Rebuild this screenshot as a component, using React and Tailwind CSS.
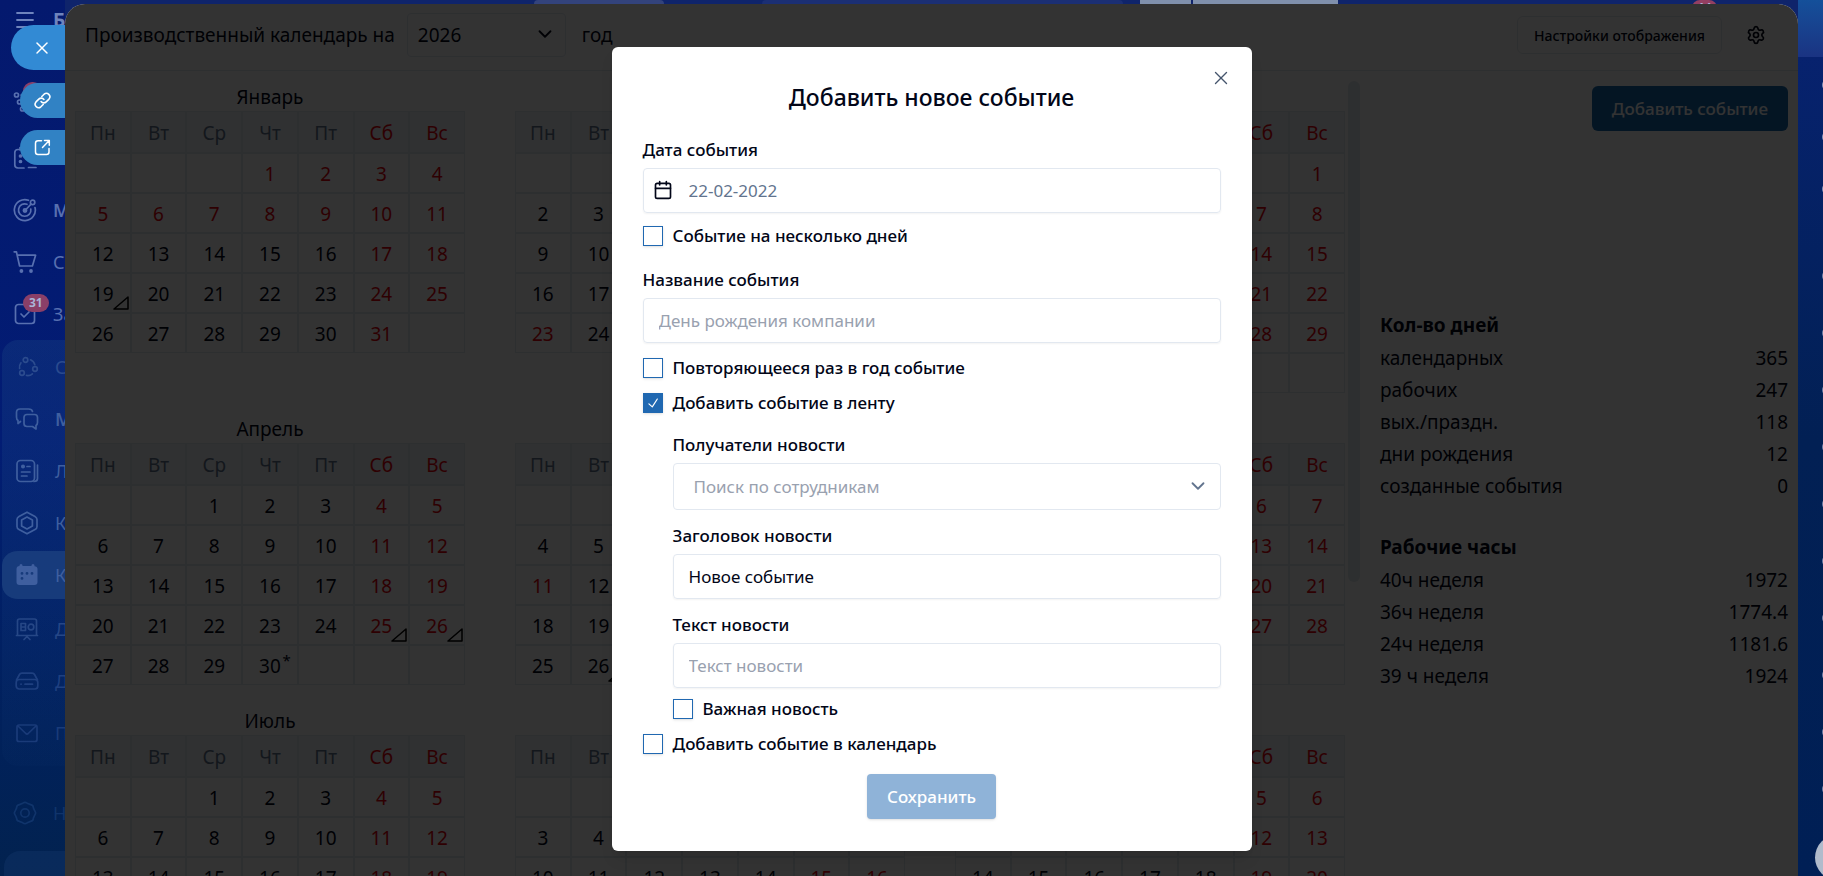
import { useState } from 'react'
import { Calendar, ChevronDown, Menu, Settings, X } from 'lucide-react'

const weekdays = ['Пн', 'Вт', 'Ср', 'Чт', 'Пт', 'Сб', 'Вс']

// start: index of the first weekday, 0 = Monday
const months = [
  { name: 'Январь', start: 3, days: 31, rows: 5, holidays: [1, 2, 5, 6, 7, 8, 9], events: [19] },
  { name: 'Февраль', start: 6, days: 28, rows: 5, holidays: [23] },
  { name: 'Март', start: 6, days: 31, rows: 6, holidays: [9] },
  { name: 'Апрель', start: 2, days: 30, rows: 5, events: [25, 26], short: [30] },
  { name: 'Май', start: 4, days: 31, rows: 5, holidays: [1, 11], events: [26] },
  { name: 'Июнь', start: 0, days: 30, rows: 5, holidays: [12] },
  { name: 'Июль', start: 2, days: 31, rows: 5 },
  { name: 'Август', start: 5, days: 31, rows: 6 },
  { name: 'Сентябрь', start: 1, days: 30, rows: 5 },
]

const dayStats = [
  ['календарных', '365'],
  ['рабочих', '247'],
  ['вых./праздн.', '118'],
  ['дни рождения', '12'],
  ['созданные события', '0'],
]

const hourStats = [
  ['40ч неделя', '1972'],
  ['36ч неделя', '1774.4'],
  ['24ч неделя', '1181.6'],
  ['39 ч неделя', '1924'],
]

function Month({ name, start, days, rows, holidays = [], events = [], short = [] }) {
  return (
    <section>
      <h2 className="h-[30px] text-center text-[19px] leading-8">{name}</h2>
      <table className="w-full table-fixed border-separate border-spacing-0 text-center text-[19px]">
        <thead>
          <tr>
            {weekdays.map((day, i) => (
              <th
                key={day}
                className={`h-[42px] border border-slate-200 bg-slate-100 pt-0.5 font-normal ${i > 4 ? 'text-red-600' : 'text-slate-500'}`}
              >
                {day}
              </th>
            ))}
          </tr>
        </thead>
        <tbody>
          {Array.from({ length: rows }, (_, row) => (
            <tr key={row}>
              {weekdays.map((weekday, col) => {
                const day = row * 7 + col - start + 1
                const visible = day > 0 && day <= days
                const off = col > 4 || holidays.includes(day)
                return (
                  <td key={weekday} className={`relative h-10 border border-slate-200 pt-0.5 ${off ? 'text-red-600' : ''}`}>
                    {visible && day}
                    {events.includes(day) && (
                      <svg className="absolute right-px bottom-0.5 text-black" width="16" height="14" viewBox="0 0 16 14" fill="none" stroke="currentColor" strokeWidth="1.5" strokeLinejoin="round">
                        <path d="M1 13H15V1Z" />
                      </svg>
                    )}
                    {short.includes(day) && <sup className="absolute top-1.5 right-1.5 text-[15px] leading-4">*</sup>}
                  </td>
                )
              })}
            </tr>
          ))}
        </tbody>
      </table>
    </section>
  )
}

function Stats({ title, rows }) {
  return (
    <div>
      <h3 className="h-[33px] text-[19px] leading-8 font-bold">{title}</h3>
      <dl>
        {rows.map(([label, value]) => (
          <div key={label} className="flex h-8 justify-between text-[19px] leading-8">
            <dt>{label}</dt>
            <dd>{value}</dd>
          </div>
        ))}
      </dl>
    </div>
  )
}

function Checkbox({ label, defaultChecked }) {
  const [checked, setChecked] = useState(Boolean(defaultChecked))
  return (
    <label className="flex h-5 items-center gap-2.5 text-[17px] font-medium">
      <span className="grid size-5 place-items-center">
        <input
          type="checkbox"
          checked={checked}
          onChange={(e) => setChecked(e.target.checked)}
          className="col-start-1 row-start-1 size-5 appearance-none border border-[#2068b1] shadow-sm checked:bg-[#2068b1]"
        />
        {checked && (
          <svg className="pointer-events-none relative col-start-1 row-start-1 text-white" width="18" height="18" viewBox="0 0 15 15" fill="none" stroke="currentColor" strokeLinecap="round" strokeLinejoin="round">
            <path d="M4.1 8.2L6.9 10.7L11.1 4.2" />
          </svg>
        )}
      </span>
      {label}
    </label>
  )
}

function Field({ id, label, ...input }) {
  return (
    <div>
      <label htmlFor={id} className="block h-7 text-[17px] leading-5 font-medium">
        {label}
      </label>
      <input
        id={id}
        className="h-[45px] w-full rounded border border-slate-200 px-[15px] text-[17px] shadow-xs placeholder:text-gray-400"
        {...input}
      />
    </div>
  )
}

function EventDialog() {
  return (
    <div role="dialog" aria-labelledby="dialog-title" className="relative w-[640px] rounded-md bg-white px-[31px] pt-[34px] pb-8 text-slate-950 shadow-lg">
      <button type="button" aria-label="Закрыть" className="absolute top-5 right-5 text-slate-600">
        <X size={22} strokeWidth={1.5} />
      </button>
      <h1 id="dialog-title" className="text-center text-[23px] leading-8 font-medium">
        Добавить новое событие
      </h1>

      <form className="mt-[27px]">
        <label htmlFor="date" className="block h-7 text-[17px] leading-5 font-medium">
          Дата события
        </label>
        <div className="relative">
          <Calendar size={20} className="absolute top-3 left-2.5" />
          <input
            id="date"
            placeholder="22-02-2022"
            className="h-[45px] w-full rounded border border-slate-200 pr-4 pl-[45px] text-[17px] shadow-xs placeholder:text-slate-500"
          />
        </div>
        <div className="mt-[13px] mb-6">
          <Checkbox label="Событие на несколько дней" />
        </div>

        <Field id="name" label="Название события" placeholder="День рождения компании" />
        <div className="mt-[15px] flex flex-col gap-[15px]">
          <Checkbox label="Повторяющееся раз в год событие" />
          <Checkbox label="Добавить событие в ленту" defaultChecked />
        </div>

        <div className="mt-[22px] ml-[30px] flex flex-col gap-4">
          <div>
            <label htmlFor="recipients" className="block h-7 text-[17px] leading-5 font-medium">
              Получатели новости
            </label>
            <div className="relative">
              <select id="recipients" className="h-[47px] w-full appearance-none rounded border border-slate-200 bg-white px-5 text-[17px] text-gray-400">
                <option>Поиск по сотрудникам</option>
              </select>
              <ChevronDown size={22} className="pointer-events-none absolute top-3 right-3 text-slate-500" />
            </div>
          </div>
          <Field id="news-title" label="Заголовок новости" defaultValue="Новое событие" />
          <Field id="news-text" label="Текст новости" placeholder="Текст новости" />
        </div>
        <div className="mt-[11px] mb-[15px] ml-[30px]">
          <Checkbox label="Важная новость" />
        </div>
        <Checkbox label="Добавить событие в календарь" />

        <div className="mt-5 flex justify-center">
          <button type="submit" disabled className="h-[45px] rounded bg-[#8fb3d8] px-5 text-[17px] font-medium text-white shadow-sm">
            Сохранить
          </button>
        </div>
      </form>
    </div>
  )
}

function NavItem({ icon: Icon, label, badge, className = '' }) {
  return (
    <a href="#" className={`flex h-[52px] items-center gap-4 pl-[13px] text-[18px] ${className}`}>
      <span className="relative shrink-0">
        <Icon />
        {badge && (
          <span className="absolute -top-2 left-2.5 rounded-full bg-[#8a3f68] px-1.5 text-[12px] leading-[18px] font-bold text-[#aab4d8]">
            {badge}
          </span>
        )}
      </span>
      {label}
    </a>
  )
}

function NavIcon({ children }) {
  return (
    <svg width="24" height="24" viewBox="0 0 24 24" fill="none" stroke="currentColor" strokeWidth="1.7" strokeLinecap="round" strokeLinejoin="round">
      {children}
    </svg>
  )
}

const FeedIcon = () => (
  <NavIcon>
    <circle cx="3.5" cy="5" r="2" />
    <circle cx="6.5" cy="12" r="2" />
    <circle cx="9.5" cy="19" r="2" />
    <path d="M8 5h14M11 12h11M14 19h8" />
  </NavIcon>
)

const PlannerIcon = () => (
  <NavIcon>
    <path d="M11 22H5Q1.800 22 1.800 19V6.500Q1.800 3.500 5 3.500H19Q22 3.500 22 6.500V12M7 1.500V4M17 1.500V4M15.500 21.500H23" />
    <circle cx="7.500" cy="10" r="1" fill="currentColor" />
    <circle cx="7.500" cy="15.500" r="1" fill="currentColor" />
  </NavIcon>
)

const TargetIcon = () => (
  <NavIcon>
    <path d="M15.500 2.300A10.500 10.500 0 1 0 22 9.500" />
    <path d="M14 6.300A6.200 6.200 0 1 0 17.800 11" />
    <circle cx="12" cy="12.500" r="1.600" fill="currentColor" />
    <path d="M12.500 12L18 6.200" />
    <circle cx="19.600" cy="4.400" r="2.200" />
  </NavIcon>
)

const CartIcon = () => (
  <NavIcon>
    <path d="M1.200 1.800H3.400L6.600 16H19.400L22.600 5.200H4.200" />
    <circle cx="8.400" cy="21" r="1.900" fill="currentColor" stroke="none" />
    <circle cx="18" cy="21" r="1.900" fill="currentColor" stroke="none" />
  </NavIcon>
)

const TaskIcon = () => (
  <NavIcon>
    <rect x="2.500" y="2.500" width="19" height="19" rx="3" />
    <path d="M8 12L11 15L16 10" />
  </NavIcon>
)

const OrbitIcon = () => (
  <NavIcon>
    <circle cx="10.500" cy="5" r="2.300" />
    <circle cx="20" cy="14" r="2.300" />
    <circle cx="7" cy="18" r="2.300" />
    <path d="M15.500 4.800Q19 6.400 19.800 9.600M4.600 13.400Q3.800 10.600 6 7.800M11.500 20.400Q15 21 17.400 18.800" />
  </NavIcon>
)

const ChatIcon = () => (
  <NavIcon>
    <path d="M5.500 14.500L3 16.500V13.500Q1.500 12.500 1.500 10V5.500Q1.500 2 5 2H13.500Q17 2 17.500 4.500" />
    <path d="M12 7.500H19.500Q22.500 7.500 22.500 10.500V15.500Q22.500 17.500 21 18.500V22L17.500 19.500H12Q9 19.500 9 16.500V10.500Q9 7.500 12 7.500Z" />
  </NavIcon>
)

const NewsIcon = () => (
  <NavIcon>
    <rect x="2" y="1.500" width="17.500" height="21" rx="3.500" />
    <path d="M22.500 6V19.500Q22.500 22.500 19 22.500M6.500 13H15M6.500 17H12M12 7.500H15" />
    <circle cx="8" cy="7.500" r="1.200" fill="currentColor" />
  </NavIcon>
)

const HexIcon = () => (
  <NavIcon>
    <path d="M12 1.200L20 5.400Q22 6.500 22 8.600V15.400Q22 17.500 20 18.600L12 22.800L4 18.600Q2 17.500 2 15.400V8.600Q2 6.500 4 5.400Z" />
    <path d="M12 6L17.400 9V15L12 18L6.600 15V9Z" />
  </NavIcon>
)

const SolidCalendarIcon = () => (
  <svg width="24" height="24" viewBox="0 0 24 24" fill="currentColor">
    <path
      fillRule="evenodd"
      d="M6 1a1.500 1.500 0 0 1 1.500 1.500V3h9v-.5a1.500 1.500 0 0 1 3 0V3.200A3 3 0 0 1 22.500 6v13a3 3 0 0 1-3 3H4.500a3 3 0 0 1-3-3V6a3 3 0 0 1 3-2.900V2.500A1.500 1.500 0 0 1 6 1zM7 9a1.400 1.400 0 1 0 0 2.800A1.400 1.400 0 0 0 7 9zM12 9a1.400 1.400 0 1 0 0 2.800A1.400 1.400 0 0 0 12 9zM17 9a1.400 1.400 0 1 0 0 2.800A1.400 1.400 0 0 0 17 9zM7 14a1.400 1.400 0 1 0 0 2.800A1.400 1.400 0 0 0 7 14z"
    />
  </svg>
)

const BoardIcon = () => (
  <NavIcon>
    <path d="M2.500 18V4Q2.500 2 4.500 2H19.500Q21.500 2 21.500 4V18M1.500 18.500H22.500M9 22.500L12 19.500L15 22.500" />
    <path d="M6 6.500H10.500V13.500H6ZM6 10H10.500" />
    <circle cx="16" cy="10" r="2.800" />
  </NavIcon>
)

const DriveIcon = () => (
  <NavIcon>
    <path d="M1.500 11L4.500 5.500Q5.200 4.200 6.800 4.200H17.200Q18.800 4.200 19.500 5.500L22.500 11" />
    <rect x="1.200" y="10.500" width="21.600" height="9.500" rx="3" />
    <path d="M6 15.200h.1M10 15.200h7.500" />
  </NavIcon>
)

const MailIcon = () => (
  <NavIcon>
    <rect x="2" y="4" width="20" height="16.500" rx="2" />
    <path d="M3 5L10.800 12.500Q12 13.600 13.200 12.500L21 5" />
  </NavIcon>
)

const GearIcon = () => (
  <NavIcon>
    <path d="M9.800 2.200Q12 .5 14.200 2.200L17.600 3.600Q20.400 4 20.400 6.800L21.800 10Q23.400 12 21.800 14L20.400 17.200Q20.400 20 17.600 20.400L14.200 21.800Q12 23.500 9.800 21.800L6.400 20.400Q3.600 20 3.600 17.200L2.200 14Q.6 12 2.200 10L3.600 6.800Q3.600 4 6.400 3.600Z" />
    <circle cx="12" cy="12" r="4.200" />
  </NavIcon>
)

function Sidebar() {
  return (
    <aside className="relative w-[65px] shrink-0 overflow-hidden text-[#6f84bd]">
      <nav>
        <a href="#" className="flex h-10 items-center gap-4 pl-[13px] text-[19px] font-bold">
          <Menu size={24} strokeWidth={1.8} className="shrink-0" />
          Б
        </a>
        <div className="pt-9 text-[#5870b0]">
          <NavItem icon={FeedIcon} badge="1" className="mb-1" />
          <NavItem icon={PlannerIcon} />
          <NavItem icon={TargetIcon} label="М" className="font-semibold" />
          <NavItem icon={CartIcon} label="С" />
          <NavItem icon={TaskIcon} label="За" badge="31" />
        </div>
        <div className="ml-0.5 h-[426px] rounded-l-2xl bg-linear-to-b from-[#1c4a86]/30 to-[#1c4a86]/5 pt-px text-[#3f5f9f]">
          <NavItem icon={OrbitIcon} label="Со" className="text-[16px] text-[#2b4b8e]" />
          <NavItem icon={ChatIcon} label="М" className="font-semibold" />
          <NavItem icon={NewsIcon} label="Л" />
          <NavItem icon={HexIcon} label="К" />
          <NavItem icon={SolidCalendarIcon} label="К" className="mb-0.5 rounded-l-2xl border-y-2 border-transparent bg-[#1f4482]/70 bg-clip-padding" />
          <NavItem icon={BoardIcon} label="Д" className="text-[#264786]" />
          <NavItem icon={DriveIcon} label="Д" className="text-[#1f4080]" />
          <NavItem icon={MailIcon} label="П" className="text-[#1a3b79]" />
        </div>
        <NavItem icon={GearIcon} label="Н" className="mt-[21px] text-[#10346b]" />
        <div className="mt-3 ml-1 h-8 rounded-tl-2xl bg-[#14376c]/40" />
      </nav>

      {/* Controls of the open slider */}
      <div className="absolute top-[25px] right-0 flex flex-col items-end text-white">
        <button type="button" aria-label="Закрыть" className="mb-[13px] flex h-[45px] w-[54px] items-center rounded-l-full bg-[#328ad4] pl-[21px]">
          <X size={20} strokeWidth={1.8} />
        </button>
        <button type="button" aria-label="Скопировать ссылку" className="mb-3 flex h-[35px] w-[45px] items-center rounded-l-full bg-[#3182c4] pl-3.5">
          <svg width="17" height="17" viewBox="0 0 24 24" fill="none" stroke="currentColor" strokeWidth="2.200" strokeLinecap="round" strokeLinejoin="round">
            <path d="M10 13.500a4.800 4.800 0 0 0 7.200.5l4-4a4.900 4.900 0 0 0-6.900-6.900L11 6.400" />
            <path d="M14 10.500a4.800 4.800 0 0 0-7.200-.5l-4 4a4.900 4.900 0 0 0 6.900 6.900l3.300-3.300" />
          </svg>
        </button>
        <button type="button" aria-label="Открыть в новом окне" className="flex h-[35px] w-[45px] items-center rounded-l-full bg-[#3182c4] pl-3.5">
          <svg width="17" height="17" viewBox="0 0 17 17" fill="none" stroke="currentColor" strokeWidth="1.500" strokeLinecap="round" strokeLinejoin="round">
            <path d="M7.500 1.800H4Q1.500 1.800 1.500 4.300V13Q1.500 15.500 4 15.500H12.500Q15 15.500 15 13V9.500" />
            <path d="M10.500 1.500H15.300V6.300M15 1.800L8.500 8.500" />
          </svg>
        </button>
      </div>
    </aside>
  )
}

// Left edges of the contact avatars, the rest is beyond the window
function ContactRail() {
  return (
    <div className="flex w-[25px] shrink-0 flex-col overflow-hidden bg-linear-to-b from-[#082272] via-[#022054] to-[#001f55]">
      <div className="h-[57px] w-full shrink-0 bg-linear-to-b from-[#14509a] to-[#1a3382]" />
      <div className="mt-[22px] ml-6 flex flex-col gap-10">
        {[1, 2, 3].map((n) => (
          <span key={n} className="h-3 w-6 shrink-0 rounded-full bg-[#8090b8]" />
        ))}
      </div>
      <div className="mt-[75px] ml-6 flex flex-col gap-[45px]">
        {Array.from({ length: 10 }, (_, i) => (
          <span key={i} className="h-3 w-6 shrink-0 rounded-full bg-[#7080a8]" />
        ))}
      </div>
      <span className="mt-10 ml-[17px] size-[45px] shrink-0 rounded-full bg-[#b0bbcc]" />
    </div>
  )
}

export default function App() {
  return (
    <div
      className="flex h-screen overflow-hidden bg-linear-to-b from-[#04196e] via-[#021c74] to-[#02224f]"
      style={{ fontFamily: '"Segoe UI", "Noto Sans", "Open Sans", sans-serif' }}
    >
      <Sidebar />

      <div className="relative flex min-w-0 flex-1 flex-col bg-[#0f246b]">
        {/* Sliver of the portal header above the slider */}
        <div className="flex h-1 shrink-0 overflow-hidden">
          <span className="ml-[469px] w-[130px] rounded-t-full bg-[#33437c]" />
          <span className="ml-[98px] w-[361px] rounded-t-full bg-[#1b2f74]" />
          <span className="ml-[17px] w-[51px] bg-[#8090ac]" />
          <span className="ml-0.5 w-[145px] bg-[#8090ac]" />
          <span className="mr-[81px] ml-auto h-4 w-[25px] rounded-t-lg bg-[#933f62] text-center text-[12px] leading-4 font-bold text-[#aab4d8]">
            14
          </span>
        </div>

        <div className="relative flex-1 overflow-hidden rounded-t-[20px] bg-white text-slate-950">
          <header className="flex h-[67px] items-center border-b border-slate-200 pr-8 pb-1 pl-5 text-[19px]">
            <label htmlFor="year">Производственный календарь на</label>
            <div className="relative ml-3">
              <select id="year" className="h-11 w-[159px] appearance-none rounded border border-slate-200 pl-2.5">
                <option>2026</option>
              </select>
              <ChevronDown size={22} className="pointer-events-none absolute top-2.5 right-2.5" />
            </div>
            <span className="ml-4">год</span>
            <button type="button" className="ml-auto h-[38px] rounded-md border border-slate-200 px-4 text-[14px] font-medium">
              Настройки отображения
            </button>
            <button type="button" aria-label="Настройки" className="ml-6">
              <Settings size={20} />
            </button>
          </header>

          <main className="flex items-start px-2.5 pt-2.5">
            <div className="grid flex-1 grid-cols-3 gap-x-[50px] gap-y-5">
              {months.map((month) => (
                <Month key={month.name} {...month} />
              ))}
            </div>
            <div className="ml-[3px] h-[501px] w-3 rounded-full bg-slate-200" />
            <aside className="ml-5 w-[408px]">
              <button type="button" className="mt-[5px] ml-auto block h-[45px] rounded-md bg-[#186ab0] px-5 text-[17px] font-medium text-white">
                Добавить событие
              </button>
              <div className="mt-[178px] flex flex-col gap-[29px]">
                <Stats title="Кол-во дней" rows={dayStats} />
                <Stats title="Рабочие часы" rows={hourStats} />
              </div>
            </aside>
          </main>

          <div className="absolute inset-0 flex items-start justify-center bg-black/80 pt-[43px]">
            <EventDialog />
          </div>
        </div>
      </div>

      <ContactRail />
    </div>
  )
}
